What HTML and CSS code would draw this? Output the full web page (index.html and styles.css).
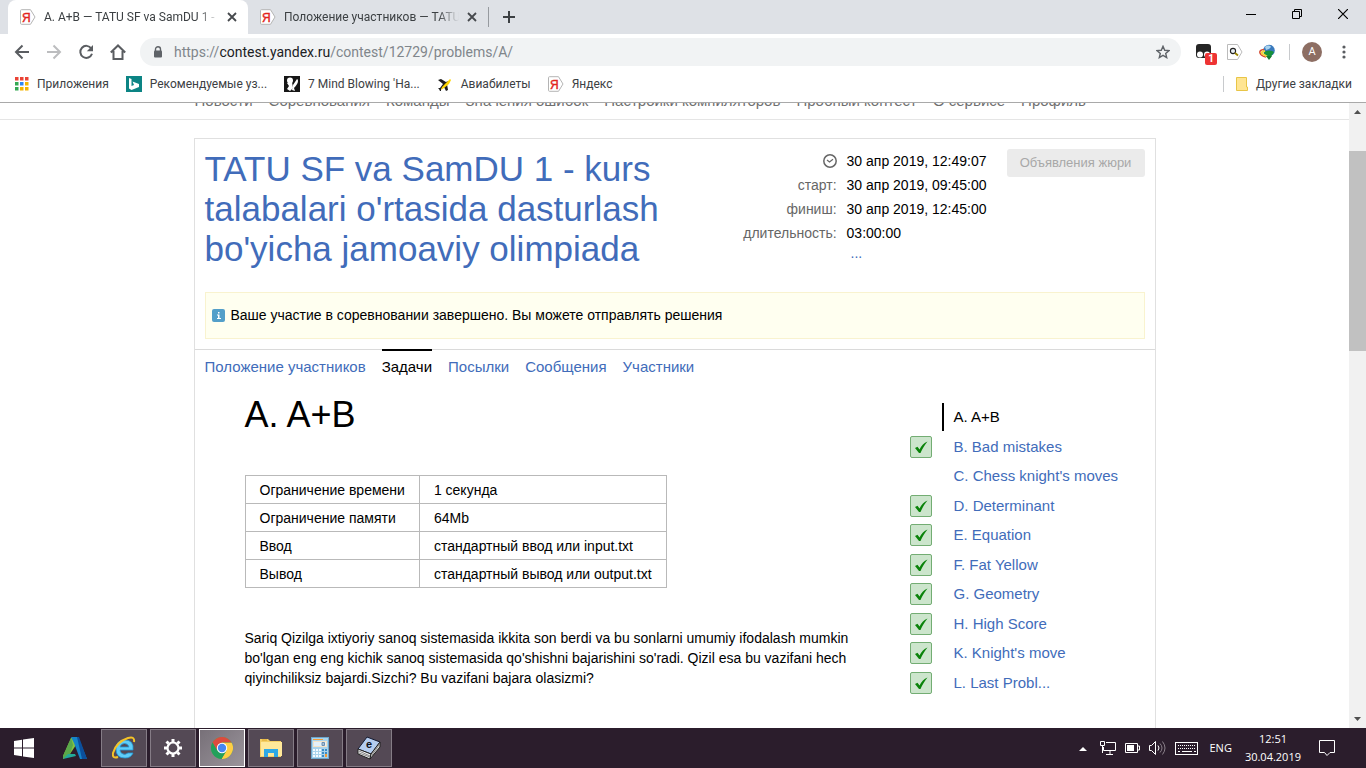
FILE: index.html
```html
<!DOCTYPE html>
<html lang="ru">
<head>
<meta charset="utf-8">
<title>A. A+B — TATU SF va SamDU 1</title>
<link rel="stylesheet" href="styles.css">
</head>
<body>
<svg class="defs" aria-hidden="true">
  <symbol id="ya" viewBox="0 0 16 16"><path d="M1.5.7h9l4.500 7.300-4.500 7.300h-9a1 1 0 0 1-1-1V1.700a1 1 0 0 1 1-1z" fill="#fff" stroke="#b4b4b4"/><text x="2" y="12.500" font-family="Liberation Sans, sans-serif" font-size="12" fill="#e2241b" stroke="#e2241b" stroke-width=".4">Я</text></symbol>
  <symbol id="close" viewBox="0 0 10 10"><path d="M1 1l8 8M9 1L1 9" stroke="#46494d" stroke-width="1.800" fill="none"/></symbol>
  <symbol id="tick" viewBox="0 0 14 14"><path d="M1 8l2.500-1.200L5.500 9.500C7.500 5.500 10 3 13.500 1.500 10.500 5 8.500 8.500 6.500 13H5z" fill="#0a830a"/></symbol>
</svg>

<header class="browser">
  <div class="tabstrip">
    <div class="tab tab-active"><svg class="i16"><use href="#ya"/></svg><span class="tab-title">A. A+B — TATU SF va SamDU 1 -</span><button class="tab-close" aria-label="Закрыть"><svg class="i10"><use href="#close"/></svg></button></div>
    <div class="tab"><svg class="i16"><use href="#ya"/></svg><span class="tab-title">Положение участников — TATU</span><button class="tab-close" aria-label="Закрыть"><svg class="i10"><use href="#close"/></svg></button></div>
    <button class="tab-new" aria-label="Новая вкладка"><svg width="12" height="12" viewBox="0 0 12 12"><path d="M6 0v12M0 6h12" stroke="#3c4043" stroke-width="2"/></svg></button>
    <div class="window-buttons">
      <button aria-label="Свернуть"><svg width="10" height="10"><path d="M0 5.500h10" stroke="#000"/></svg></button>
      <button aria-label="Окно"><svg width="10" height="10" fill="none" stroke="#000"><path d="M.5 2.500h7v7h-7zM2.500 2.500v-2h7v7h-2"/></svg></button>
      <button aria-label="Закрыть окно"><svg width="10" height="10"><path d="M0 0l10 10M10 0L0 10" stroke="#000" stroke-width="1.200"/></svg></button>
    </div>
  </div>

  <div class="toolbar">
    <div class="nav-buttons">
      <button aria-label="Назад"><svg width="16" height="16" viewBox="0 0 16 16" fill="none" stroke="#5a5d61" stroke-width="2"><path d="M15 8H2M8.500 1.500L2 8l6.500 6.500"/></svg></button>
      <button aria-label="Вперёд"><svg width="16" height="16" viewBox="0 0 16 16" fill="none" stroke="#bcbdbf" stroke-width="2"><path d="M1 8h13M7.500 1.500L14 8l-6.500 6.500"/></svg></button>
      <button aria-label="Обновить"><svg width="16" height="16" viewBox="0 0 16 16"><path d="M13.300 4.500A6 6 0 1 0 14 9.800" fill="none" stroke="#5a5d61" stroke-width="2"/><path d="M15 1v6.200H8.800z" fill="#5a5d61"/></svg></button>
      <button aria-label="Домой"><svg width="16" height="16" viewBox="0 0 16 16" fill="none" stroke="#5a5d61" stroke-width="2"><path d="M.8 8.500L8 1.500l7.200 7M3.500 7v8h9V7"/></svg></button>
    </div>
    <div class="omnibox">
      <svg width="10" height="12" viewBox="0 0 10 12"><path d="M2.500 5V3.200a2.500 2.500 0 0 1 5 0V5" fill="none" stroke="#5f6368" stroke-width="1.400"/><rect x="1" y="4.500" width="8" height="7" rx="1" fill="#5f6368"/></svg>
      <span class="url">https://<b>contest.yandex.ru</b>/contest/12729/problems/A/</span>
      <svg width="14" height="14" viewBox="0 0 14 14"><path d="M7 1.300l1.700 4 4.300.3-3.300 2.800 1 4.200L7 10.400l-3.700 2.200 1-4.200L1 5.600l4.300-.3z" fill="none" stroke="#5f6368" stroke-width="1.400"/></svg>
    </div>
    <div class="extensions">
      <span class="ext"><svg width="15" height="15" viewBox="0 0 15 15"><rect width="15" height="14" rx="3" fill="#252525"/><circle cx="4" cy="10.500" r="3" fill="#fff"/><circle cx="11" cy="10.500" r="3" fill="#fff"/></svg><span class="badge">1</span></span>
      <svg width="16" height="16" viewBox="0 0 16 16"><path d="M.5.5h10L15 8l-4.500 7.500H.5z" fill="#fff" stroke="#bbb"/><circle cx="6" cy="7" r="2.600" fill="#e8eef4" stroke="#222" stroke-width="1.100"/><path d="M8 9l3 2.500" stroke="#9b8500" stroke-width="1.800"/></svg>
      <svg width="16" height="16" viewBox="0 0 16 16"><circle cx="10" cy="6.500" r="5.800" fill="#3979bd"/><path d="M6 3c2-2 5-2 6 0l-2 2-3 1z" fill="#a9d3ee"/><path d="M5 8q5-3 10 0l-4 6-6-3z" fill="#17923a"/><path d="M5 5.500Q0 6 1 9t6 4" fill="none" stroke="#d44b30" stroke-width="1.500"/><path d="M6 7Q2 7.500 3 9.500l5 3" fill="none" stroke="#f2d43a" stroke-width="2"/><path d="M7 12h6l-3 4z" fill="#167d2e"/></svg>
    </div>
    <span class="divider"></span>
    <button class="avatar">A</button>
    <button class="menu" aria-label="Меню"><svg width="4" height="14" fill="#5a5d61"><circle cx="2" cy="2" r="1.600"/><circle cx="2" cy="7" r="1.600"/><circle cx="2" cy="12" r="1.600"/></svg></button>
  </div>

  <nav class="bookmarks">
    <a href="#"><svg width="14" height="14" viewBox="0 0 14 14"><path d="M0 0h3.500v3.500H0zM5 0h3.500v3.500H5zM10 0h3.500v3.500H10z" fill="#ea4335"/><path d="M0 5h3.500v3.500H0zM0 10h3.500v3.500H0z" fill="#34a853"/><path d="M5 5h3.500v3.500H5z" fill="#2c86f5"/><path d="M10 5h3.500v3.500H10zM5 10h3.500v3.500H5zM10 10h3.500v3.500H10z" fill="#f4b400"/></svg>Приложения</a>
    <a href="#"><svg width="16" height="16"><rect width="16" height="16" fill="#0c8484"/><path d="M3 2l2.500 1v7L8 9 6.500 5.500 13 8v3l-7.500 3L3 12.500z" fill="#fff"/></svg>Рекомендуемые уз...</a>
    <a href="#"><svg width="16" height="16"><rect width="16" height="16" fill="#161616"/><circle cx="6" cy="4.500" r="3" fill="#fff"/><path d="M3 7l5-1 1 6-3 3-3-2 2-3z" fill="#fff"/><path d="M9 9l4-6c2 1 1 5-3 9l1 3-3-1z" fill="#fff"/></svg>7 Mind Blowing 'Ha...</a>
    <a href="#"><svg width="16" height="16"><path d="M1 4l3-1 5 3 2-1-1 3 1 6-2 1-2-4-3 2v2H3l-1-2-1-1h2l3-4z" fill="#1d1d1d"/><path d="M7 9l6-6 1 1-2 4-5 4-3 2 1-3z" fill="#ffd500"/></svg>Авиабилеты</a>
    <a href="#"><svg class="i16"><use href="#ya"/></svg>Яндекс</a>
    <a href="#" class="bookmarks-other"><svg width="12" height="14"><path d="M.5.500h10V10h1v3.500H.5z" fill="#ffe592" stroke="#e8c547"/></svg>Другие закладки</a>
  </nav>
</header>

<div class="viewport">
  <div class="page">
    <div class="site-head">
      <nav class="site-menu wrap">
        <a href="#">Новости</a><a href="#">Соревнования</a><a href="#">Команды</a><a href="#">Значения ошибок</a><a href="#">Настройки компиляторов</a><a href="#">Пробный контест</a><a href="#">О сервисе</a><a href="#">Профиль</a>
      </nav>
    </div>
    <main class="contest wrap">
      <section class="contest-head">
        <h1 class="contest-title"><a href="#">TATU SF va SamDU 1 - kurs talabalari o'rtasida dasturlash bo'yicha jamoaviy olimpiada</a></h1>
        <dl class="times">
          <dt><svg width="14" height="14" viewBox="0 0 14 14" fill="none" stroke="#666"><circle cx="7" cy="7" r="6.200" stroke-width="1.500"/><path d="M4 6l2.500 2L10 5.200" stroke-width="1.200"/></svg></dt><dd>30 апр 2019, 12:49:07</dd>
          <dt>старт:</dt><dd>30 апр 2019, 09:45:00</dd>
          <dt>финиш:</dt><dd>30 апр 2019, 12:45:00</dd>
          <dt>длительность:</dt><dd>03:00:00</dd>
          <dd class="more"><a href="#">...</a></dd>
        </dl>
        <button class="jury" disabled>Объявления жюри</button>
      </section>
      <p class="notice"><svg width="13" height="13"><rect width="13" height="13" rx="2" fill="#539fc9"/><path d="M6 3h1.500v1.500H6zM5 5.500h2.500V9H9v1H5V9h1V6.500H5z" fill="#fff"/></svg>Ваше участие в соревновании завершено. Вы можете отправлять решения</p>
      <nav class="contest-tabs">
        <a href="#">Положение участников</a><a href="#" class="current">Задачи</a><a href="#">Посылки</a><a href="#">Сообщения</a><a href="#">Участники</a>
      </nav>
      <div class="columns">
        <article class="problem">
          <h2>A. A+B</h2>
          <table class="limits">
            <tr><td>Ограничение времени</td><td>1 секунда</td></tr>
            <tr><td>Ограничение памяти</td><td>64Mb</td></tr>
            <tr><td>Ввод</td><td>стандартный ввод или input.txt</td></tr>
            <tr><td>Вывод</td><td>стандартный вывод или output.txt</td></tr>
          </table>
          <p>Sariq Qizilga ixtiyoriy sanoq sistemasida ikkita son berdi va bu sonlarni umumiy ifodalash mumkin bo'lgan eng eng kichik sanoq sistemasida qo'shishni bajarishini so'radi. Qizil esa bu vazifani hech qiyinchiliksiz bajardi.Sizchi? Bu vazifani bajara olasizmi?</p>
        </article>
        <ul class="problems">
          <li class="current"><a href="#">A. A+B</a></li>
          <li><span class="ok"><svg class="i14"><use href="#tick"/></svg></span><a href="#">B. Bad mistakes</a></li>
          <li><a href="#">C. Chess knight's moves</a></li>
          <li><span class="ok"><svg class="i14"><use href="#tick"/></svg></span><a href="#">D. Determinant</a></li>
          <li><span class="ok"><svg class="i14"><use href="#tick"/></svg></span><a href="#">E. Equation</a></li>
          <li><span class="ok"><svg class="i14"><use href="#tick"/></svg></span><a href="#">F. Fat Yellow</a></li>
          <li><span class="ok"><svg class="i14"><use href="#tick"/></svg></span><a href="#">G. Geometry</a></li>
          <li><span class="ok"><svg class="i14"><use href="#tick"/></svg></span><a href="#">H. High Score</a></li>
          <li><span class="ok"><svg class="i14"><use href="#tick"/></svg></span><a href="#">K. Knight's move</a></li>
          <li><span class="ok"><svg class="i14"><use href="#tick"/></svg></span><a href="#">L. Last Probl...</a></li>
        </ul>
      </div>
    </main>
  </div>
  <div class="scrollbar">
    <svg width="17" height="17"><path d="M5 11l3.500-4L12 11z" fill="#505050"/></svg>
    <div class="track"><div class="thumb"></div></div>
    <svg width="17" height="17"><path d="M5 6l3.500 4L12 6z" fill="#505050"/></svg>
  </div>
</div>

<footer class="taskbar">
  <button class="task start" aria-label="Пуск"><svg width="20" height="20" fill="#fff"><path d="M0 3l8-1.200v7.700H0zM9 1.600L20 0v9.500H9zM0 10.500h8v7.700L0 17zM9 10.500h11V20L9 18.400z"/></svg></button>
  <button class="task" aria-label="Autodesk"><svg width="24" height="24" viewBox="0 0 24 24"><path d="M8 2h5v7L7 18l-7 5v-3z" fill="#83c341"/><path d="M8 2L0 20v3l7-5 3-9z" fill="#5aa84a"/><path d="M8 1h7l9 22h-7L11 7z" fill="#1584c8"/><path d="M14 1h2l8 22h-5z" fill="#0b4f9c"/><path d="M0 23l5-5h7l1 2z" fill="#22a99a"/></svg></button>
  <button class="task open" aria-label="Internet Explorer"><svg width="24" height="24" viewBox="0 0 24 24"><path d="M8 14h13q1-10-8-10Q4 4 4 13t9 9q6 0 8-5h-5q-3 2.500-6 .5-2-1-2-3.500zm0-3q1-3.500 4.500-3.500T17 11z" fill="#60cdf7" stroke="#219bd9" stroke-width=".8"/><path d="M22 6q1-6-6-4Q4 6 1 17q-1 6 5 4" fill="none" stroke="#f5c327" stroke-width="2"/></svg></button>
  <button class="task open" aria-label="Параметры"><svg width="18" height="18" viewBox="-9 -9 18 18" fill="none" stroke="#fff"><circle r="5.500" stroke-width="2.200"/><path d="M0-6v-3M0 6v3M6 0h3M-6 0h-3M4.500-4.500l2-2M-4.500 4.500l-2 2M4.500 4.500l2 2M-4.500-4.500l-2-2" stroke-width="3"/></svg></button>
  <button class="task open active" aria-label="Chrome"><svg width="22" height="22" viewBox="-11 -11 22 22"><circle r="11" fill="#4caf50"/><path d="M-9.500-5.500A11 11 0 0 1 9.500-5.500H0L-4.800 2.500z" fill="#dd4b3e"/><path d="M9.600-5.300A11 11 0 0 1-.5 11L4.500 2.500 0-5.300z" fill="#ffce44"/><path d="M-9.500-5.500A11 11 0 0 0-.5 11L4.500 2.500-4.500 3z" fill="#22a05b"/><circle r="5.200" fill="#fff"/><circle r="4.200" fill="#4886f1"/></svg></button>
  <button class="task open" aria-label="Проводник"><svg width="22" height="20"><path d="M0 1h8l2 2h11v16H0z" fill="#f5cf64"/><path d="M1 4h21v14H1z" fill="#ffe89a"/><path d="M2 2h5" stroke="#dca52b"/><path d="M4 11h14v8h-4v-4H8v4H4z" fill="#2ea9e6"/></svg></button>
  <button class="task open" aria-label="Калькулятор"><svg width="18" height="22"><rect x=".5" y=".5" width="17" height="21" fill="#a9d3ec" stroke="#6ca7ce"/><path d="M2 2h10v1H2z" fill="#f09b38"/><path d="M2 4h14v6H2z" fill="#f4e3c8"/><path d="M3 5h12v4H3z" fill="#e4f1fa"/><path d="M11 5.500h2.500v3H11zM11 7h2.500" fill="none" stroke="#6d8fb0"/><path d="M2 13h8M2 16h8M2 19h8" stroke="#f4faff" stroke-width="2" stroke-dasharray="2 1"/><path d="M11 13h5M11 16h5M11 19h2" stroke="#3a8cc6" stroke-width="2" stroke-dasharray="2 1"/><path d="M14 17h2v3h-2z" fill="#f09b38"/></svg></button>
  <button class="task open" aria-label="Словарь"><svg width="24" height="24"><path d="M1 13L10 1l13 5-9 12z" fill="#b5cdf0" stroke="#141a30"/><path d="M1 13v5l12 5 1-5z" fill="#f3f3f3" stroke="#222"/><path d="M14 18l9-12v5l-10 12z" fill="#d5d5d5" stroke="#222"/><path d="M2 15l11 5M2 17l11 4M15 19l7-10" stroke="#888"/><text x="9" y="12" font-size="11" font-weight="bold" font-family="Liberation Sans, sans-serif" fill="#101018">e</text></svg></button>
  <div class="tray">
    <svg width="8" height="5"><path d="M0 5l4-4 4 4z" fill="#fff"/></svg>
    <svg width="16" height="14" fill="none" stroke="#fff"><path d="M6 1.500h9.500v8h-12V6M10 9.500v4M6 13.500h7M.5.500h4v4h-4zM2.500 4.500V12"/></svg>
    <svg width="15" height="10"><path d="M.5.500h12v9H.5zM13 3h1.500v4H13" fill="none" stroke="#fff"/><path d="M2 2h7v6H2z" fill="#fff"/></svg>
    <svg width="17" height="14" fill="none"><path d="M.5 4.500h2l4-4v13l-4-4h-2zM9 4.500q2 2.500 0 5" stroke="#fff"/><path d="M11 2.500q4 4.500 0 9M13.500.5q5 6.500 0 13" stroke="#8b818b"/></svg>
    <svg width="23" height="13" fill="none" stroke="#fff"><rect x=".5" y=".5" width="22" height="12"/><path d="M3 3.500h18M3 6.500h18" stroke-dasharray="1 1"/><path d="M3 9.500h2M7 9.500h10M19 9.500h2"/></svg>
    <span class="lang">ENG</span>
    <time class="clock">12:51<br>30.04.2019</time>
    <svg width="16" height="16" fill="none" stroke="#fff"><path d="M.5.500h15v12H11L8 15.500 5.500 12.500h-5z"/></svg>
  </div>
</footer>
</body>
</html>
```
FILE: styles.css
```css
* { box-sizing: border-box; }
body { margin: 0; height: 100vh; display: flex; flex-direction: column; overflow: hidden; background: #fff; color: #000; font: 14px/20px "Liberation Sans", Arial, sans-serif; }
button { margin: 0; padding: 0; border: 0; background: none; font: inherit; color: inherit; display: flex; align-items: center; justify-content: center; }
a { color: #416cba; text-decoration: none; }
svg { flex: none; display: block; }
.defs { position: absolute; width: 0; height: 0; }
.i16 { width: 16px; height: 16px; }
.i14 { width: 14px; height: 14px; }
.i10 { width: 10px; height: 10px; }

/* Browser frame */
.browser { flex: none; font: 12px/16px Roboto, "Noto Sans", sans-serif; color: #3c4043; border-bottom: 1px solid #a9a9a9; }
.tabstrip { display: flex; height: 34px; padding-left: 8px; background: #dee1e6; }
.tab { display: flex; align-items: center; width: 240px; padding: 0 11px 0 12px; gap: 8px; }
.tab-active { background: #fff; border-radius: 8px 8px 0 0; }
.tab-title { flex: 1; overflow: hidden; white-space: nowrap; mask-image: linear-gradient(to right, #000 88%, transparent); }
.tab-new { width: 40px; height: 20px; margin-top: 7px; border-left: 1px solid #969a9f; }
.window-buttons { display: flex; margin-left: auto; height: 28px; }
.window-buttons button { width: 46px; }

.toolbar { display: flex; align-items: center; height: 36px; padding: 0 12px 0 6px; }
.nav-buttons { display: flex; }
.nav-buttons button { width: 32px; height: 32px; }
.omnibox { flex: 1; display: flex; align-items: center; gap: 11px; height: 28px; margin-left: 6px; padding: 0 11px 0 13px; border-radius: 14px; background: #f1f3f4; }
.url { flex: 1; font-size: 14px; color: #80868b; }
.url b { font-weight: normal; color: #202124; }
.extensions { display: flex; gap: 16px; margin: 0 14px 0 15px; }
.ext { position: relative; }
.badge { position: absolute; left: 9px; top: 9px; width: 12px; border-radius: 2px; background: #ee3333; color: #fff; font-size: 10px; line-height: 12px; font-weight: bold; text-align: center; }
.divider { width: 1px; height: 16px; background: #c8cacd; }
.avatar { width: 20px; height: 20px; margin: 0 20px 0 12px; border-radius: 50%; background: #8d6e63; color: #fff; font-size: 11px; }
.menu { width: 4px; margin-right: 8px; }

.bookmarks { display: flex; align-items: center; gap: 17px; height: 32px; padding: 0 14px 4px 15px; }
.bookmarks a { display: flex; align-items: center; gap: 8px; color: #3c4043; white-space: nowrap; }
.bookmarks .bookmarks-other { margin-left: auto; padding-left: 12px; border-left: 1px solid #c8cacd; }

/* Page area */
.viewport { flex: 1; min-height: 0; display: flex; overflow: hidden; }
.page { flex: 1; min-width: 0; overflow: hidden; }
.wrap { max-width: 962px; margin: 0 auto; }
.site-head { height: 17px; display: flex; align-items: flex-end; border-bottom: 1px solid #e5e5e5; }
.site-menu { flex: 1; display: flex; gap: 16px; padding: 0 0 8px 1px; font-size: 15px; }
.site-menu a { color: #707070; white-space: nowrap; }
.contest { margin-top: 18px; border: 1px solid #e0e0e0; }
.contest-head { display: flex; align-items: flex-start; padding: 10px; }
.contest-title { flex: 1; margin: 0; padding-right: 40px; font-size: 35px; line-height: 40px; font-weight: normal; }
.times { display: grid; grid-template-columns: auto auto; column-gap: 10px; margin: 0 20px 0 0; line-height: 24px; }
.times dt { display: flex; justify-content: flex-end; align-items: center; color: #666; }
.times dd { margin: 0; }
.times .more { grid-column: 2; padding-left: 4px; line-height: 16px; }
.jury { width: 138px; height: 28px; border-radius: 3px; background: #ebebeb; color: #a8a8a8; font-size: 13px; }
.notice { display: flex; align-items: center; gap: 6px; margin: 13px 10px 10px; padding: 12px 6px 13px; border: 1px solid #f9f3cf; background: #fffff0; }
.contest-tabs { display: flex; gap: 16px; padding: 0 10px; border-top: 1px solid #dadada; font-size: 15px; }
.contest-tabs a { margin-top: -1px; padding: 6px 0; border-top: 2px solid transparent; }
.contest-tabs .current { color: #000; border-color: #000; }
.columns { display: flex; justify-content: space-between; padding: 12px 10px 60px 50px; }
.problem { width: 620px; }
.problem h2 { margin: 0 0 40px; font-size: 36px; line-height: 40px; font-weight: normal; }
.problem p { margin: 40px 0; }
.limits { border-collapse: collapse; }
.limits td { padding: 4px 14px 3px; border: 1px solid #b9b9b9; }
.problems { width: 235px; margin: 7px 0 0; padding: 0; list-style: none; font-size: 15px; }
.problems li { display: grid; grid-template-columns: 32px 1fr; align-items: center; min-height: 29px; }
.problems li:nth-child(odd) { min-height: 30px; }
.problems a { grid-column: 2; padding: 4px 0 4px 10px; border-left: 2px solid transparent; }
.problems .current a { color: #000; border-color: #000; }
.ok { grid-row: 1; display: flex; align-items: center; justify-content: center; width: 22px; height: 22px; border: 1px solid #73ad73; border-radius: 2px; background: #cce5cc; }
.scrollbar { width: 17px; display: flex; flex-direction: column; background: #f1f1f1; }
.track { flex: 1; padding-top: 31px; }
.thumb { height: 200px; background: #c1c1c1; }

/* Taskbar */
.taskbar { flex: none; display: flex; align-items: center; gap: 3px; height: 40px; padding-left: 2px; background: #2b1d2c; color: #fff; font: 11px/18px "Open Sans", "Noto Sans", sans-serif; }
.task { width: 46px; height: 38px; }
.task.start { width: 44px; margin-right: 3px; }
.open { border: 1px solid #857c86; background: #544955; }
.open.active { border-color: #fff; background: linear-gradient(135deg, #777078, #9a949b); }
.tray { display: flex; align-items: center; margin-left: auto; padding-right: 31px; gap: 9px; }
.tray > :first-child { margin-right: 4px; }
.lang { margin-left: 2px; }
.clock { text-align: center; margin: 0 9px 0 4px; }
```
